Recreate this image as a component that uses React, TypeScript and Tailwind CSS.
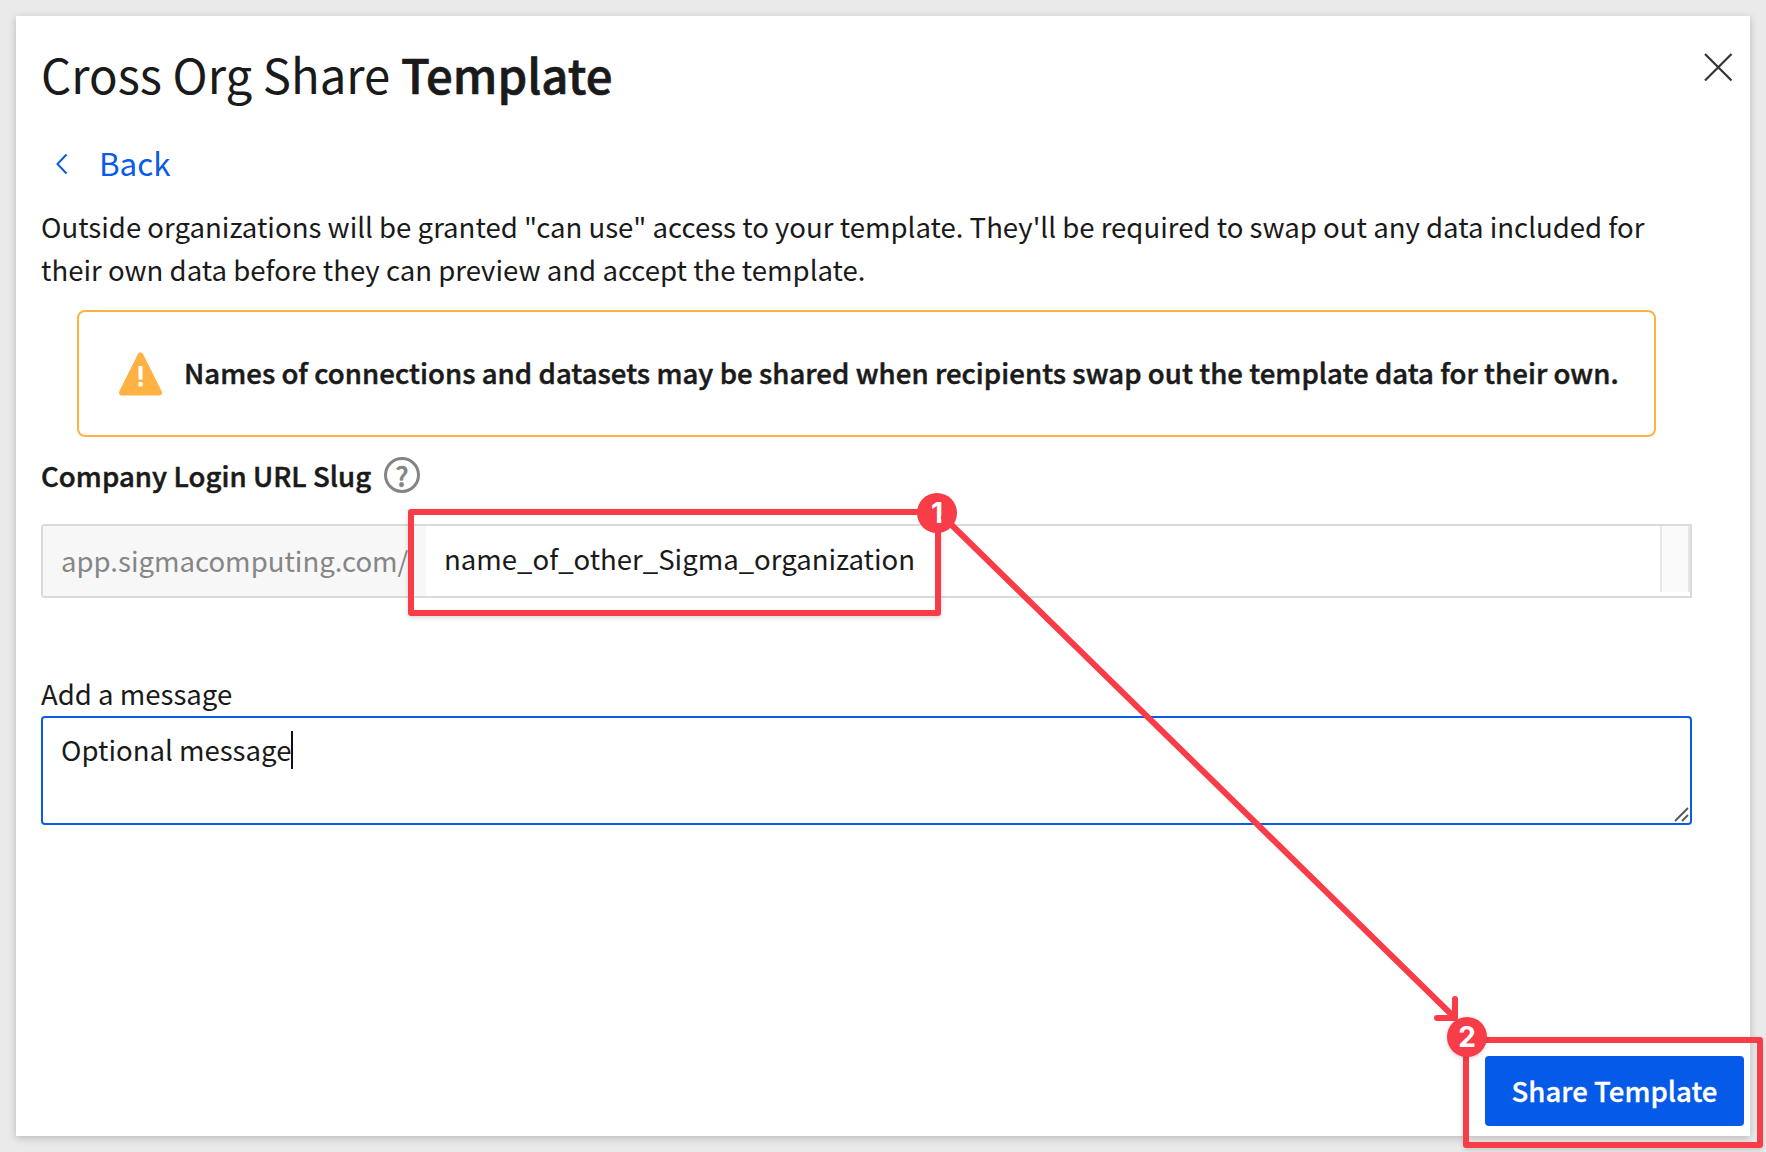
const red = "#f93d48";

export default function App() {
  return (
    <div className="relative h-[1152px] w-[1766px] overflow-hidden bg-[#eaeaea] p-4 font-['Noto_Sans_CJK_SC',sans-serif] text-[#1a1a1a]">
      <main className="flex h-[1120px] flex-col bg-white pl-[25px] shadow-[0_2px_8px_rgba(0,0,0,0.22)]">
        <header className="mt-[30px] flex h-14 items-start justify-between pr-4">
          <h1 className="whitespace-nowrap text-[47.3px] leading-[56px]">
            <span>Cross Org Share </span>
            <b className="font-medium [-webkit-text-stroke:0.7px]">Template</b>
          </h1>
          <button aria-label="Close" className="mt-[6px]">
            <svg width="32" height="32" viewBox="0 0 32 32" stroke="#333" strokeWidth="2.2" fill="none">
              <path d="M3 2 29.500 28.500M29.500 2 3 28.500" />
            </svg>
          </button>
        </header>

        <button className="mt-[41px] flex h-10 w-[140px] items-center pl-[13px] text-[#0a5be8]">
          <svg className="mt-[2px]" width="16" height="24" viewBox="0 0 16 24" fill="none" stroke="currentColor" strokeWidth="2">
            <path d="M12.500 2.500 3.500 12 12.500 21.500" />
          </svg>
          <span className="ml-[29px] text-[31.4px] leading-10">Back</span>
        </button>

        <p className="mt-[22px] h-[86px] whitespace-nowrap text-[27.59px] leading-[43px]">
          <span>Outside organizations will be granted "can use" access to your template. They'll be required to swap out any data included for</span>
          <br />
          <span>their own data before they can preview and accept the template.</span>
        </p>

        <section className="mt-[19px] ml-9 flex h-[127px] w-[1579px] items-center rounded-lg border-2 border-[#feb244] pl-[39px]">
          <svg width="44" height="46" viewBox="0 0 44 46">
            <path d="M22.500 4.500 41 41.500H4Z" fill="#feb244" stroke="#feb244" strokeWidth="6" strokeLinejoin="round" />
            <path d="M20.500 15h4v13.500h-4zM20.500 31h4v4.500h-4z" fill="#fff" />
          </svg>
          <b className="-mt-[3px] ml-[22px] whitespace-nowrap text-[27.59px] leading-10 font-medium tracking-[0.045px] [-webkit-text-stroke:0.5px]">
            <span>Names of connections and datasets may be shared when recipients swap out the template data for their own.</span>
          </b>
        </section>

        <div className="mt-[18px] flex h-10 items-center">
          <b className="w-[330px] whitespace-nowrap text-[27.59px] leading-10 font-medium tracking-[0.045px] [-webkit-text-stroke:0.5px]">
            <span>Company Login URL Slug</span>
          </b>
          <span className="ml-[13px] flex size-9 items-center justify-center rounded-full border-[3px] border-[#848484] text-[27px] leading-none font-medium text-[#848484] [-webkit-text-stroke:0.5px]">?</span>
        </div>

        <div className="mt-[29px] flex h-[74px] w-[1651px] rounded-l border-2 border-[#dadada]">
          <div className="flex w-[383px] items-center bg-[#f7f7f7] pl-[18px] text-[27.56px] text-[#868686]">
            <span className="whitespace-nowrap">app.sigmacomputing.com/</span>
          </div>
          <div className="flex flex-1 items-center pb-1 pl-[18px] text-[27.56px]">
            <span>name_of_other_Sigma_organization</span>
          </div>
          <div className="h-[66px] w-[30px] border-x-2 border-[#e7e7e7] bg-[#fafafa]" />
        </div>

        <label className="mt-[75px] h-10 text-[27.56px] leading-10">
          <span>Add a message</span>
        </label>
        <div className="relative mt-[3px] flex h-[109px] w-[1651px] items-start rounded border-2 border-[#0a5be8] pt-[11px] pl-[18px] text-[27.56px] leading-10">
          <span>Optional message</span>
          <i className="mt-[2px] h-[38px] w-[2px] bg-[#111]" />
          <svg className="absolute right-[1px] bottom-px" width="15" height="15" viewBox="0 0 15 15" stroke="#555" strokeWidth="1.8">
            <path d="M1 14 14 1M8 14 14 8" />
          </svg>
        </div>

        <button className="mt-auto mr-[6px] mb-[10px] flex h-[70px] w-[259px] items-center justify-center self-end rounded bg-[#065ae8] text-[27.59px] font-medium text-white [-webkit-text-stroke:0.3px]">
          <span>Share Template</span>
        </button>
      </main>

      <div className="absolute top-[508.5px] left-[408px] h-[107.5px] w-[533px] rounded-[3px] border-[6px] border-[#f93d48] shadow-[0_2px_5px_rgba(0,0,0,0.15)]" />
      <div className="absolute top-[1037px] left-[1462.5px] h-[111px] w-[300.5px] rounded-[3px] border-[6px] border-[#f93d48] shadow-[0_2px_5px_rgba(0,0,0,0.15)]" />
      <span className="absolute top-[493px] left-[917px] flex size-10 items-center justify-center rounded-full bg-[#f93d48] font-[Inter] text-[28px] font-bold text-white">1</span>
      <svg className="absolute inset-0" width="1766" height="1152" fill="none" stroke={red} strokeWidth="6" strokeLinecap="round" strokeLinejoin="round">
        <path d="M944 517.500 1454 1017M1455 999V1018H1437" />
      </svg>
      <span className="absolute top-[1017px] left-[1447px] flex size-10 items-center justify-center rounded-full bg-[#f93d48] font-[Inter] text-[28px] font-bold text-white shadow-[0_1px_4px_rgba(0,0,0,0.2)]">2</span>
    </div>
  );
}
